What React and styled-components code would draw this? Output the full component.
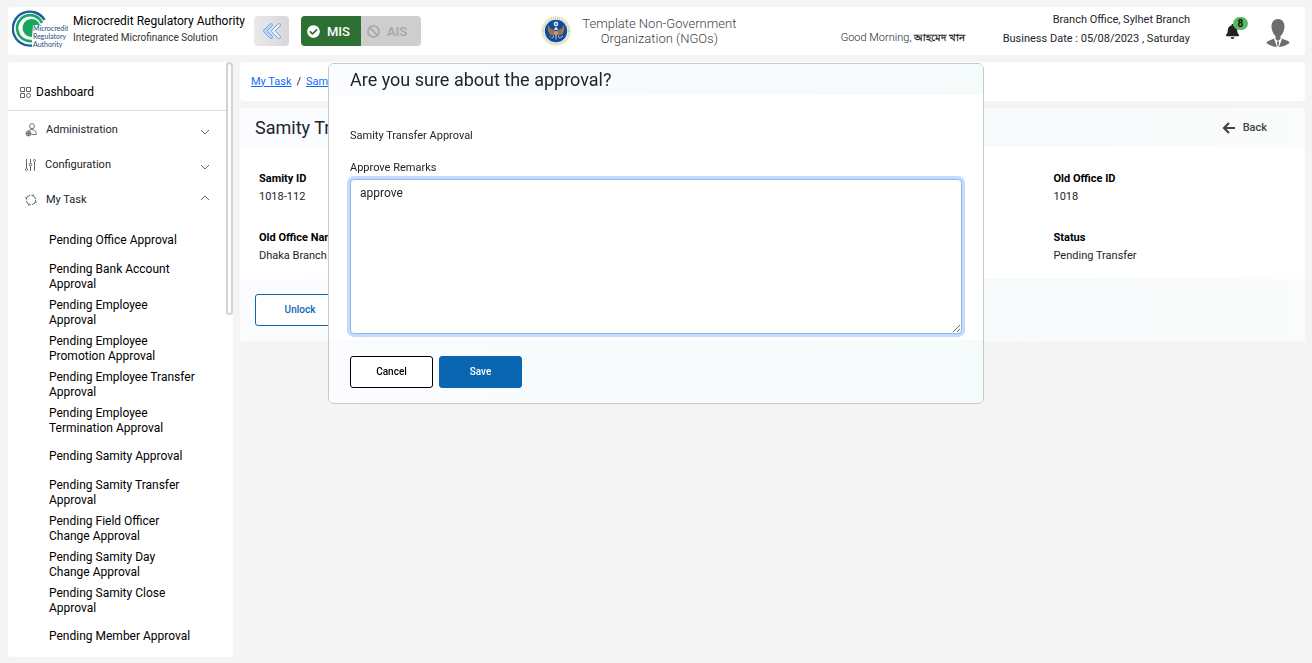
import React from "react"
import styled, { createGlobalStyle } from "styled-components"
import { FaBan, FaCheckCircle, FaBell } from "react-icons/fa"

const menu = [
  "Pending Office Approval",
  "Pending Bank Account Approval",
  "Pending Employee Approval",
  "Pending Employee Promotion Approval",
  "Pending Employee Transfer Approval",
  "Pending Employee Termination Approval",
  "Pending Samity Approval",
  "Pending Samity Transfer Approval",
  "Pending Field Officer Change Approval",
  "Pending Samity Day Change Approval",
  "Pending Samity Close Approval",
  "Pending Member Approval",
]

const details = [
  { label: "Samity ID", value: "1018-112" },
  { label: "Old Office ID", value: "1018" },
  { label: "Old Office Name", value: "Dhaka Branch" },
  { label: "Status", value: "Pending Transfer" },
]

const MraLogo = () => (
  <svg width="56" height="40" viewBox="0 0 56 40" role="img" aria-label="MRA">
    <path d="M20 36.500A17 17 0 1 1 32.500 11" fill="none" stroke="#1c5f9e" strokeWidth="2.400" />
    <path d="M20 32A13 13 0 1 1 30 14" fill="none" stroke="#1fa567" strokeWidth="2.600" />
    <path d="M20 28A9 9 0 1 1 28 16H21Z" fill="#16a75c" />
    <g fill="#1d4a78" fontFamily="Lato, sans-serif" fontSize="7">
      <text x="21" y="22">Microcredit</text>
      <text x="21" y="30">Regulatory</text>
      <text x="21" y="38">Authority</text>
    </g>
  </svg>
)

const SealLogo = () => (
  <svg width="30" height="30" viewBox="0 0 30 30" aria-hidden="true">
    <circle cx="15" cy="15" r="14.300" fill="#fffef4" stroke="#f0e3a0" strokeWidth="1" />
    <circle cx="15" cy="15" r="12.600" fill="none" stroke="#a9b4c8" strokeWidth="1.400" strokeDasharray="1 1" />
    <circle cx="15" cy="15" r="11.200" fill="#0f4a9c" />
    <circle cx="15" cy="8" r="2.400" fill="#d5e2ea" />
    <circle cx="15" cy="8" r="1.100" fill="#5579a5" />
    <path d="M13.500 14L10 13L7 9Q5.500 14 9 18.500L13 20ZM16.500 14L20 13L23 9Q24.500 14 21 18.500L17 20Z" fill="#a0744a" />
    <path d="M14 11.500H16L17 14H13Z" fill="#e8dfd2" />
    <path d="M13 14H17V18L15 20L13 18Z" fill="#e9d8d5" />
    <path d="M13 14H17V15.500H13Z" fill="#344d87" />
    <path d="M14 16V19M16 16V19" stroke="#b44b50" />
    <path d="M13 20L11 22.500M17 20L19 22.500M15 20V23.500" stroke="#d9c9a0" />
    <path d="M8 20L10.500 21.500" stroke="#679066" />
    <path d="M22 20L19.500 21.500" stroke="#c9d3dd" />
  </svg>
)

const CollapseIcon = () => (
  <svg width="20" height="16" viewBox="0 0 20 16" aria-hidden="true">
    <g fill="none" strokeLinecap="round" strokeLinejoin="round">
      <path d="M9 2L3 8L9 14M17 2L11 8L17 14" stroke="#5a9cec" strokeWidth="3.400" />
      <path d="M9 2L3 8L9 14" stroke="#c6e0ff" strokeWidth="1.800" />
      <path d="M17 2L11 8L17 14" stroke="#fff" strokeWidth="1.800" />
    </g>
  </svg>
)

const Avatar = () => (
  <svg width="24" height="28" viewBox="0 0 24 28" aria-hidden="true">
    <path d="M12 0C16 0 18.500 3 18.500 7.500C18.500 11 16.500 15.500 14.500 17V20L12 22L9.500 20V17C7.500 15.500 5.500 11 5.500 7.500C5.500 3 8 0 12 0Z" fill="#6c6d6f" />
    <path d="M8 19.500L11 27.900Q5 27.500 .3 24C1 21.500 4 21.500 8 19.500ZM16 19.500L13 27.900Q19 27.500 23.700 24C23 21.500 20 21.500 16 19.500ZM11 22.500H13L12.700 27H11.300Z" fill="#6c6d6f" />
  </svg>
)

const GridIcon = () => (
  <svg width="11" height="11" viewBox="0 0 11 11" fill="none" stroke="#666" aria-hidden="true">
    <path d="M.5.5H4.500V4.500H.5ZM6.500.5H10.500V4.500H6.500ZM.5 6.500H4.500V10.500H.5Z" />
    <circle cx="8.500" cy="8.500" r="2" />
  </svg>
)

const AdminIcon = () => (
  <svg width="12" height="14" viewBox="0 0 12 14" fill="none" stroke="#777" aria-hidden="true">
    <circle cx="7" cy="3.200" r="2.500" />
    <path d="M3.500 8Q4 6.500 7 6.500Q11 6.500 11.300 11.500H6.500" />
    <circle cx="3.500" cy="10.500" r="2.500" fill="#aaa" />
    <path d="M3.500 8V13M1 10.500H6" />
  </svg>
)

const SlidersIcon = () => (
  <svg width="11" height="12" viewBox="0 0 11 12" fill="none" stroke="#666" aria-hidden="true">
    <path d="M1.500 0V9M5.500 0V4M5.500 7V12M9.500 3V12" />
    <circle cx="1.500" cy="10.500" r="1" />
    <circle cx="5.500" cy="5.500" r="1.300" />
    <circle cx="9.500" cy="1.500" r="1" />
  </svg>
)

const TaskIcon = () => (
  <svg width="12" height="12" viewBox="0 0 12 12" fill="none" stroke="#666" aria-hidden="true">
    <circle cx="6" cy="6" r="4.800" strokeDasharray="6.200 1.300" />
    <path d="M.3 3.500L2 4.500M8.500 .3L7.500 2M11.700 8.500L10 7.500M3.500 11.700L4.500 10" />
  </svg>
)

// the closed arrow hangs below the label's middle, the open one sits above it
const Chevron = ({ up }) => (
  <svg width="10" height="12" viewBox="0 0 10 12" fill="none" stroke="#666" aria-hidden="true">
    <path d={up ? "M1 6L5 2L9 6" : "M1 6L5 10L9 6"} />
  </svg>
)

const BackArrow = () => (
  <svg width="13" height="12" viewBox="0 0 13 12" fill="none" stroke="#444" strokeWidth="2.200" aria-hidden="true">
    <path d="M7 1L2 6L7 11M2 6H13" />
  </svg>
)

const App = () => {
  return (
    <>
      <GlobalStyle />
      <Page>
        <Header>
          <Brand>
            <MraLogo />
            <div>
              <BrandName>Microcredit Regulatory Authority</BrandName>
              <BrandSub>Integrated Microfinance Solution</BrandSub>
            </div>
          </Brand>
          <CollapseButton type="button" aria-label="Collapse menu">
            <CollapseIcon />
          </CollapseButton>
          <Switch>
            <SwitchButton type="button" $active>
              <FaCheckCircle />
              MIS
            </SwitchButton>
            <SwitchButton type="button" disabled>
              <FaBan />
              AIS
            </SwitchButton>
          </Switch>
          <Organization>
            <SealLogo />
            <span>
              Template Non-Government
              <br />
              Organization (NGOs)
            </span>
          </Organization>
          <Greeting>
            Good Morning, <b>আহমেদ খান</b>
          </Greeting>
          <Branch>
            <div>Branch Office, Sylhet Branch</div>
            <div>Business Date : 05/08/2023 , Saturday</div>
          </Branch>
          <BellButton type="button" aria-label="Notifications">
            <FaBell />
            <Badge>8</Badge>
          </BellButton>
          <ProfileButton type="button" aria-label="Profile">
            <Avatar />
          </ProfileButton>
        </Header>

        <Columns>
          <Sidebar>
            <Dashboard href="#dashboard">
              <GridIcon />
              Dashboard
            </Dashboard>
            <Groups>
              <Group type="button">
                <AdminIcon />
                <span>Administration</span>
                <Chevron />
              </Group>
              <Group type="button">
                <SlidersIcon />
                <span>Configuration</span>
                <Chevron />
              </Group>
              <Group type="button">
                <TaskIcon />
                <span>My Task</span>
                <Chevron up />
              </Group>
            </Groups>
            <SubMenu>
              {menu.map((item) => (
                <li key={item}>
                  <a href="#task">{item}</a>
                </li>
              ))}
            </SubMenu>
            <ScrollThumb />
          </Sidebar>

          <Content>
            <Breadcrumb>
              <a href="#task">My Task</a>
              <span>/</span>
              <a href="#samity">Samity</a>
            </Breadcrumb>
            <Card>
              <CardHeader>
                <CardTitle>Samity Transfer</CardTitle>
                <BackButton type="button">
                  <BackArrow />
                  Back
                </BackButton>
              </CardHeader>
              <Details>
                {details.map(({ label, value }) => (
                  <div key={label}>
                    <dt>{label}</dt>
                    <dd>{value}</dd>
                  </div>
                ))}
              </Details>
              <CardFooter>
                <Button type="button" $variant="unlock">
                  Unlock
                </Button>
              </CardFooter>
            </Card>
          </Content>
        </Columns>
      </Page>

      <Modal role="dialog" aria-labelledby="modalTitle">
        <ModalTitle id="modalTitle">Are you sure about the approval?</ModalTitle>
        <ModalBody>
          <p>Samity Transfer Approval</p>
          <label htmlFor="remarks">Approve Remarks</label>
          <Remarks id="remarks" defaultValue="approve" />
        </ModalBody>
        <ModalFooter>
          <Button type="button">Cancel</Button>
          <Button type="button" $variant="save">
            Save
          </Button>
        </ModalFooter>
      </Modal>
    </>
  )
}

const GlobalStyle = createGlobalStyle`
  * {
    box-sizing: border-box;
  }

  body {
    margin: 0;
    background: #f4f4f4;
    color: #212529;
    font-family: Roboto, "Noto Sans", sans-serif;
    font-size: 12px;
    line-height: 18px;
  }

  button,
  textarea {
    font-family: inherit;
  }

  button {
    cursor: pointer;
  }

  svg {
    flex: none;
  }
`

const Page = styled.div`
  display: flex;
  flex-direction: column;
  gap: 7px;
  height: 100vh;
  padding: 7px 7px 6px 8px;
`

const Header = styled.header`
  display: flex;
  align-items: center;
  flex: none;
  height: 48px;
  padding: 0 15px 0 4px;
  background: #fff;
  border-radius: 4px;
`

const Brand = styled.div`
  display: flex;
  align-items: center;
  gap: 5px;
  width: 242px;
  padding-bottom: 4px;
  white-space: nowrap;
`

const BrandName = styled.div`
  color: #000;
  font-size: 12px;
`

const BrandSub = styled.div`
  color: #333;
  font-size: 10px;
  line-height: 16px;
`

const CollapseButton = styled.button`
  display: flex;
  align-items: center;
  justify-content: center;
  width: 35px;
  height: 30px;
  padding: 0;
  border: 0;
  border-radius: 4px;
  background: linear-gradient(90deg, #e9e9e9, #d8d8d8);
`

const Switch = styled.div`
  display: flex;
  margin-left: 12px;
  border-radius: 4px;
  overflow: hidden;
`

const SwitchButton = styled.button`
  display: flex;
  align-items: center;
  gap: 7px;
  width: 60px;
  height: 30px;
  padding: 0 0 0 6px;
  border: 0;
  background: ${(props) => (props.$active ? "#2e6f33" : "#cecece")};
  color: ${(props) => (props.$active ? "#fff" : "#a6a6a6")};
  font-size: 13px;
  font-weight: 500;

  svg {
    width: 13px;
    height: 13px;
  }
`

const Organization = styled.div`
  display: flex;
  align-items: center;
  gap: 11px;
  margin: 0 auto;
  padding-left: 16px;
  color: #444;
  font-size: 13px;
  font-weight: 300;
  line-height: 15px;
  text-align: center;
`

const Greeting = styled.div`
  padding-top: 14px;
  margin-right: 38px;
  font-size: 11px;
  font-weight: 300;

  b {
    font-size: 10px;
    font-weight: 700;
  }
`

const Branch = styled.div`
  padding-bottom: 4px;
  font-size: 11px;
  line-height: 19px;
  text-align: right;
`

const BellButton = styled.button`
  position: relative;
  display: flex;
  margin-left: 35px;
  padding: 0;
  border: 0;
  background: none;
  color: #222;
  font-size: 15px;
`

const Badge = styled.span`
  position: absolute;
  top: -7px;
  left: 8px;
  width: 15px;
  border-radius: 7px;
  background: #5cb860;
  color: #111;
  font-size: 10px;
  font-weight: 700;
  line-height: 13px;
`

const ProfileButton = styled.button`
  display: flex;
  margin-left: 26px;
  padding: 3px 0 0;
  border: 0;
  background: none;
`

const Columns = styled.div`
  display: flex;
  flex: 1;
  gap: 7px;
  min-height: 0;
`

const Sidebar = styled.nav`
  position: relative;
  flex: none;
  width: 225px;
  background: #fff;
  border-radius: 4px;
  overflow: hidden;
`

const Dashboard = styled.a`
  display: flex;
  align-items: center;
  gap: 5px;
  height: 49px;
  padding: 12px 12px 0;
  border-bottom: 1px solid #dcdcdc;
  color: #000;
  text-decoration: none;
`

const Groups = styled.div`
  padding: 1px 23px 0 17px;
`

const Group = styled.button`
  display: flex;
  align-items: center;
  gap: 9px;
  width: 100%;
  height: 35px;
  padding: 0;
  border: 0;
  background: none;
  color: #212529;
  font-size: 11px;
  text-align: left;

  span {
    flex: 1;
  }
`

const SubMenu = styled.ul`
  margin: 0;
  padding: 5px 36px 0 41px;
  list-style: none;

  li {
    display: flex;
    align-items: center;
    height: 36px;
    padding-top: 1px;
    line-height: 15px;
  }

  a {
    color: #000;
    text-decoration: none;
  }
`

const ScrollThumb = styled.div`
  position: absolute;
  top: 0;
  right: 0;
  width: 7px;
  height: 253px;
  border: 2px solid #d3d3d3;
  border-radius: 4px;
  background: #fff;
`

const Content = styled.main`
  flex: 1;
  min-width: 0;
`

const Breadcrumb = styled.nav`
  display: flex;
  align-items: center;
  gap: 5px;
  height: 39px;
  padding: 0 11px;
  margin-bottom: 7px;
  background: #fff;
  border-radius: 4px;
  font-size: 11px;

  a {
    color: #0d6efd;
  }
`

const Card = styled.section`
  background: #fff;
`

const CardHeader = styled.div`
  display: flex;
  align-items: center;
  justify-content: space-between;
  height: 39px;
  padding: 0 38px 0 15px;
  background: linear-gradient(90deg, #fafcff, #f5fafb 60%, #fafbfb);
`

const CardTitle = styled.h1`
  margin: 0;
  font-size: 18px;
  font-weight: 400;
`

const BackButton = styled.button`
  display: flex;
  align-items: center;
  gap: 8px;
  padding: 0;
  border: 0;
  background: none;
  color: #444;
  font-size: 11px;
  font-weight: 500;
`

const Details = styled.dl`
  display: grid;
  grid-template-columns: 3fr 1fr;
  gap: 23px 40px;
  margin: 0;
  padding: 23px 0 14px 19px;
  font-size: 11px;

  dt {
    color: #000;
    font-weight: 700;
  }

  dd {
    margin: 0;
  }
`

const CardFooter = styled.div`
  padding: 15px;
  background: linear-gradient(90deg, #fafcff, #f5fafb 60%, #fafbfb);
`

const variants = {
  unlock: "width: 90px; border-color: #0b66b2; color: #0b66b2;",
  save: "border-color: #0b66b2; background: #0b66b2; color: #fff;",
}

const Button = styled.button`
  width: 83px;
  height: 32px;
  padding: 0 0 2px;
  border: 1px solid #000;
  border-radius: 3px;
  background: #fff;
  color: #000;
  font-size: 10px;
  font-weight: 500;
  ${(props) => variants[props.$variant]}
`

const Modal = styled.div`
  position: fixed;
  top: 63px;
  left: 25%;
  width: 50%;
  border: 1px solid #c3caca;
  border-radius: 6px;
  background: #fff;
  overflow: hidden;
`

const ModalTitle = styled.h2`
  height: 31px;
  margin: 0;
  padding: 0 21px;
  background: linear-gradient(90deg, #fafcff, #f5fafb);
  font-size: 18px;
  font-weight: 400;
  line-height: 31px;
`

const ModalBody = styled.div`
  display: flex;
  flex-direction: column;
  padding: 32px 21px 6px;
  font-size: 11px;

  p {
    margin: 0 0 14px;
  }
`

const Remarks = styled.textarea`
  height: 155px;
  margin-top: 2px;
  padding: 4px 9px;
  border: 1px solid #93b8e8;
  border-radius: 4px;
  box-shadow: 0 0 0 3px #c2dbfe;
  color: #212529;
  font-size: 12px;
  line-height: 18px;
  outline: 0;
`

const ModalFooter = styled.div`
  display: flex;
  gap: 6px;
  padding: 16px 21px 15px;
  background: linear-gradient(90deg, #fafcff, #f5fafb);
`

export default App
